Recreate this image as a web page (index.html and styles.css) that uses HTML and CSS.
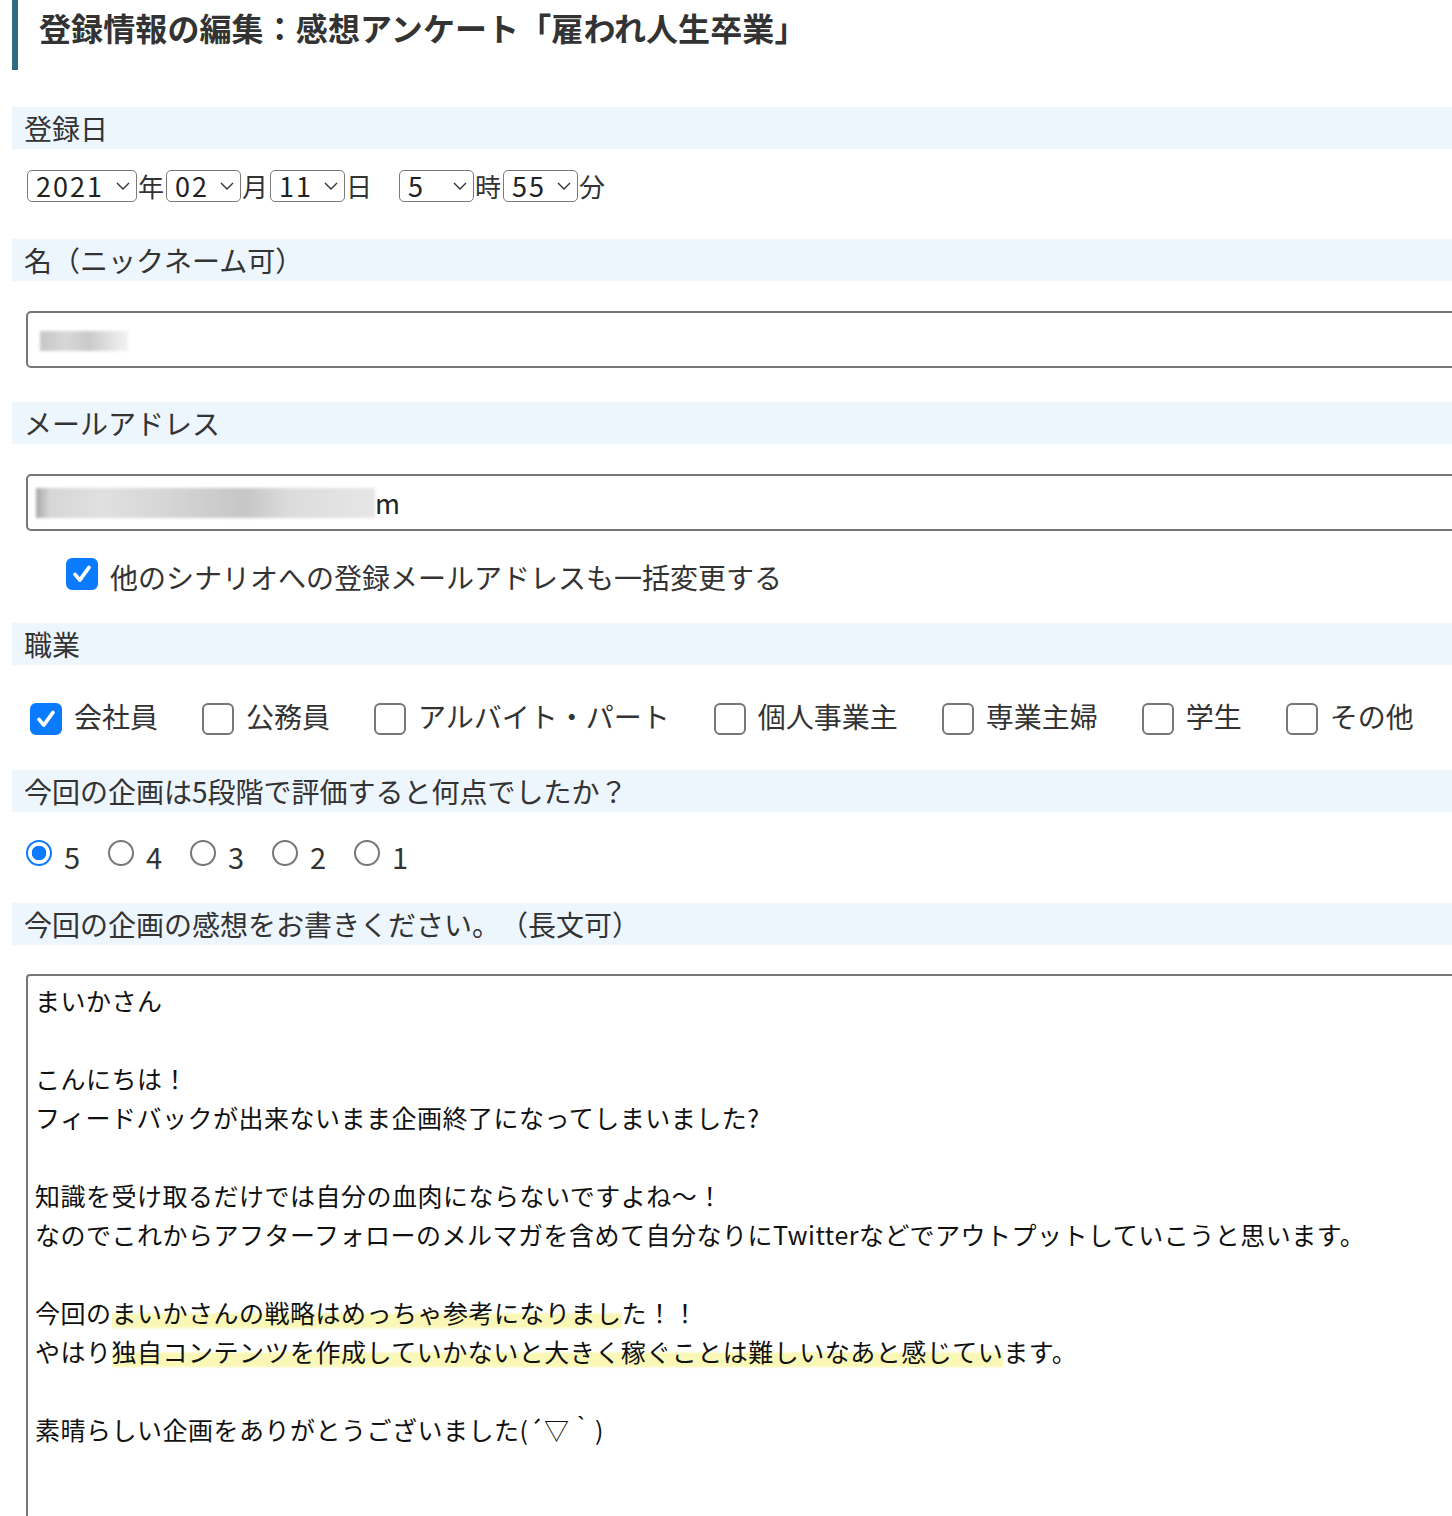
FILE: index.html
```html
<!DOCTYPE html>
<html lang="ja">
<head>
<meta charset="utf-8">
<title>登録情報の編集</title>
<link rel="stylesheet" href="styles.css">
</head>
<body>
<div class="page">
  <h1 class="title">登録情報の編集：感想アンケート「雇われ人生卒業」</h1>

  <div class="sec-head h-first">登録日</div>
  <div class="date-row">
    <span class="sel w-year"><span class="num">2021</span><svg class="chev" viewBox="0 0 14 8"><path d="M1 1 L7 7 L13 1" fill="none" stroke="#333" stroke-width="1.4"/></svg></span><span class="unit">年</span>
    <span class="sel w-2"><span class="num">02</span><svg class="chev" viewBox="0 0 14 8"><path d="M1 1 L7 7 L13 1" fill="none" stroke="#333" stroke-width="1.4"/></svg></span><span class="unit">月</span>
    <span class="sel w-2"><span class="num">11</span><svg class="chev" viewBox="0 0 14 8"><path d="M1 1 L7 7 L13 1" fill="none" stroke="#333" stroke-width="1.4"/></svg></span><span class="unit">日</span>
    <span class="sel w-2 time"><span class="num">5</span><svg class="chev" viewBox="0 0 14 8"><path d="M1 1 L7 7 L13 1" fill="none" stroke="#333" stroke-width="1.4"/></svg></span><span class="unit">時</span>
    <span class="sel w-2"><span class="num">55</span><svg class="chev" viewBox="0 0 14 8"><path d="M1 1 L7 7 L13 1" fill="none" stroke="#333" stroke-width="1.4"/></svg></span><span class="unit">分</span>
  </div>

  <div class="sec-head">名（ニックネーム可）</div>
  <div class="input input-name"><span class="blur blur-name"></span></div>

  <div class="sec-head h-mail">メールアドレス</div>
  <div class="input input-mail"><span class="blur blur-mail"></span><span class="mail-end">m</span></div>
  <label class="check-row">
    <span class="cb on"><svg viewBox="0 0 32 32"><path d="M8 16.5 L13.5 23 L24 8.5" fill="none" stroke="#fff" stroke-width="4.2" stroke-linecap="round" stroke-linejoin="round"/></svg></span>
    <span class="check-label">他のシナリオへの登録メールアドレスも一括変更する</span>
  </label>

  <div class="sec-head h-job">職業</div>
  <div class="occ-row">
    <label class="opt"><span class="cb on"><svg viewBox="0 0 32 32"><path d="M8 16.5 L13.5 23 L24 8.5" fill="none" stroke="#fff" stroke-width="4.2" stroke-linecap="round" stroke-linejoin="round"/></svg></span><span>会社員</span></label>
    <label class="opt"><span class="cb"></span><span>公務員</span></label>
    <label class="opt"><span class="cb"></span><span>アルバイト・パート</span></label>
    <label class="opt"><span class="cb"></span><span>個人事業主</span></label>
    <label class="opt"><span class="cb"></span><span>専業主婦</span></label>
    <label class="opt"><span class="cb"></span><span>学生</span></label>
    <label class="opt"><span class="cb"></span><span>その他</span></label>
  </div>

  <div class="sec-head">今回の企画は5段階で評価すると何点でしたか？</div>
  <div class="radio-row">
    <label class="ropt"><span class="radio on"></span><span class="rnum">5</span></label>
    <label class="ropt"><span class="radio"></span><span class="rnum">4</span></label>
    <label class="ropt"><span class="radio"></span><span class="rnum">3</span></label>
    <label class="ropt"><span class="radio"></span><span class="rnum">2</span></label>
    <label class="ropt"><span class="radio"></span><span class="rnum">1</span></label>
  </div>

  <div class="sec-head h-comment">今回の企画の感想をお書きください。（長文可）</div>
  <div class="textarea">まいかさん<br><br>こんにちは！<br>フィードバックが出来ないまま企画終了になってしまいました?<br><br>知識を受け取るだけでは自分の血肉にならないですよね〜！<br>なのでこれからアフターフォローのメルマガを含めて自分なりにTwitterなどでアウトプットしていこうと思います。<br><br>今回の<span class="hl">まいかさんの戦略はめっちゃ参考になりまし</span>た！！<br>やはり<span class="hl">独自コンテンツを作成していかないと大きく稼ぐことは難しいなあと感じてい</span>ます。<br><br>素晴らしい企画をありがとうございました(´▽｀)</div>
</div>
</body>
</html>
```

FILE: styles.css
```css
html, body {
  margin: 0;
  padding: 0;
  overflow: hidden;
  background: #fff;
}

body {
  font-family: "Noto Sans CJK JP", "Noto Sans", sans-serif;
  color: #333;
  text-spacing-trim: space-all;
}

.page {
  width: 1480px;
  padding-left: 12px;
}

.title {
  margin: 0;
  box-sizing: border-box;
  height: 70px;
  border-left: 6px solid #2f6a80;
  padding-left: 21px;
  font-size: 32px;
  font-weight: 700;
  line-height: 54px;
  color: #333;
  letter-spacing: 0.1px;
}

.sec-head {
  height: 42px;
  line-height: 42px;
  background: #edf5fd;
  padding-left: 12px;
  font-size: 28px;
  color: #333;
}

.h-first { margin-top: 37px; }

/* date row */
.date-row {
  display: flex;
  align-items: center;
  height: 32px;
  margin: 21px 0 37px 15px;
  font-size: 26px;
  color: #333;
}

.sel {
  box-sizing: border-box;
  height: 32px;
  display: flex;
  align-items: center;
  justify-content: space-between;
  border: 1.5px solid #7a7a7a;
  border-radius: 5px;
  padding: 0 6px 0 8px;
  font-size: 27px;
  line-height: 30px;
  color: #222;
}

.num {
  letter-spacing: 2px;
}

.chev {
  width: 14px;
  height: 8px;
  flex: none;
}

.w-year { width: 110px; }
.w-2 { width: 75px; }
.time { margin-left: 25px; }

.unit {
  margin: 0 2px 0 1px;
  line-height: 32px;
}

/* text inputs */
.input {
  box-sizing: border-box;
  height: 57px;
  margin-left: 14px;
  border: 2px solid #767676;
  border-radius: 5px;
  display: flex;
  align-items: center;
}

.input-name { margin-top: 30px; margin-bottom: 34px; padding-left: 12px; }
.input-mail { margin-top: 30px; padding-left: 8px; }

.blur {
  display: block;
  filter: blur(1.5px);
}

.blur-name {
  width: 88px;
  height: 20px;
  background: linear-gradient(90deg, #c6c6c6 0%, #d8d8d8 30%, #c9c9c9 55%, #e6e6e6 85%, #f2f2f2 100%);
  margin-top: 2px;
}

.blur-mail {
  width: 339px;
  height: 30px;
  background: linear-gradient(90deg, #a8a8a8 0%, #d6d6d6 4%, #e0e0e0 20%, #d4d4d4 40%, #c6c6c6 62%, #dcdcdc 75%, #e6e6e6 100%);
}

.mail-end {
  font-size: 27px;
  color: #222;
  line-height: 1;
}

/* checkboxes */
.cb {
  box-sizing: border-box;
  width: 32px;
  height: 32px;
  flex: none;
  border: 2px solid #777;
  border-radius: 6px;
  background: #fff;
  display: block;
}

.cb.on {
  background: #0a7bff;
  border-color: #0a7bff;
}

.cb svg {
  display: block;
  width: 28px;
  height: 28px;
}

.check-row {
  display: flex;
  align-items: center;
  gap: 12px;
  margin: 27px 0 33px 54px;
  height: 32px;
}

.check-label {
  font-size: 28px;
  color: #333;
  margin-top: 6px;
}

.occ-row {
  display: flex;
  align-items: center;
  gap: 44px;
  margin: 38px 0 35px 18px;
  height: 32px;
}

.opt {
  display: flex;
  align-items: center;
  gap: 12px;
  font-size: 28px;
  color: #333;
}

.opt span:last-child {
  margin-bottom: 7px;
}

/* radios */
.radio-row {
  display: flex;
  align-items: center;
  margin: 28px 0 37px 14px;
  height: 26px;
}

.ropt {
  display: flex;
  align-items: center;
  width: 82px;
  flex: none;
}

.radio {
  box-sizing: border-box;
  width: 26px;
  height: 26px;
  border-radius: 50%;
  border: 2px solid #777;
  background: #fff;
  flex: none;
}

.radio.on {
  border: 2.5px solid #0a7bff;
  background: radial-gradient(circle, #0a7bff 0 7px, #fff 7.6px);
}

.rnum {
  margin-left: 12px;
  margin-top: 6px;
  font-size: 29px;
  line-height: 30px;
  letter-spacing: 1px;
  color: #333;
}

/* textarea */
.textarea {
  box-sizing: border-box;
  margin: 29px 0 0 14px;
  height: 620px;
  border: 2px solid #767676;
  border-radius: 4px;
  padding: 5px 7px;
  font-size: 25px;
  line-height: 39px;
  letter-spacing: 0.5px;
  color: #111;
}

.hl {
  background: linear-gradient(to bottom, transparent 50%, rgba(245, 240, 110, 0.5) 58%, rgba(245, 240, 110, 0.5) 90%, transparent 100%);
}
```
